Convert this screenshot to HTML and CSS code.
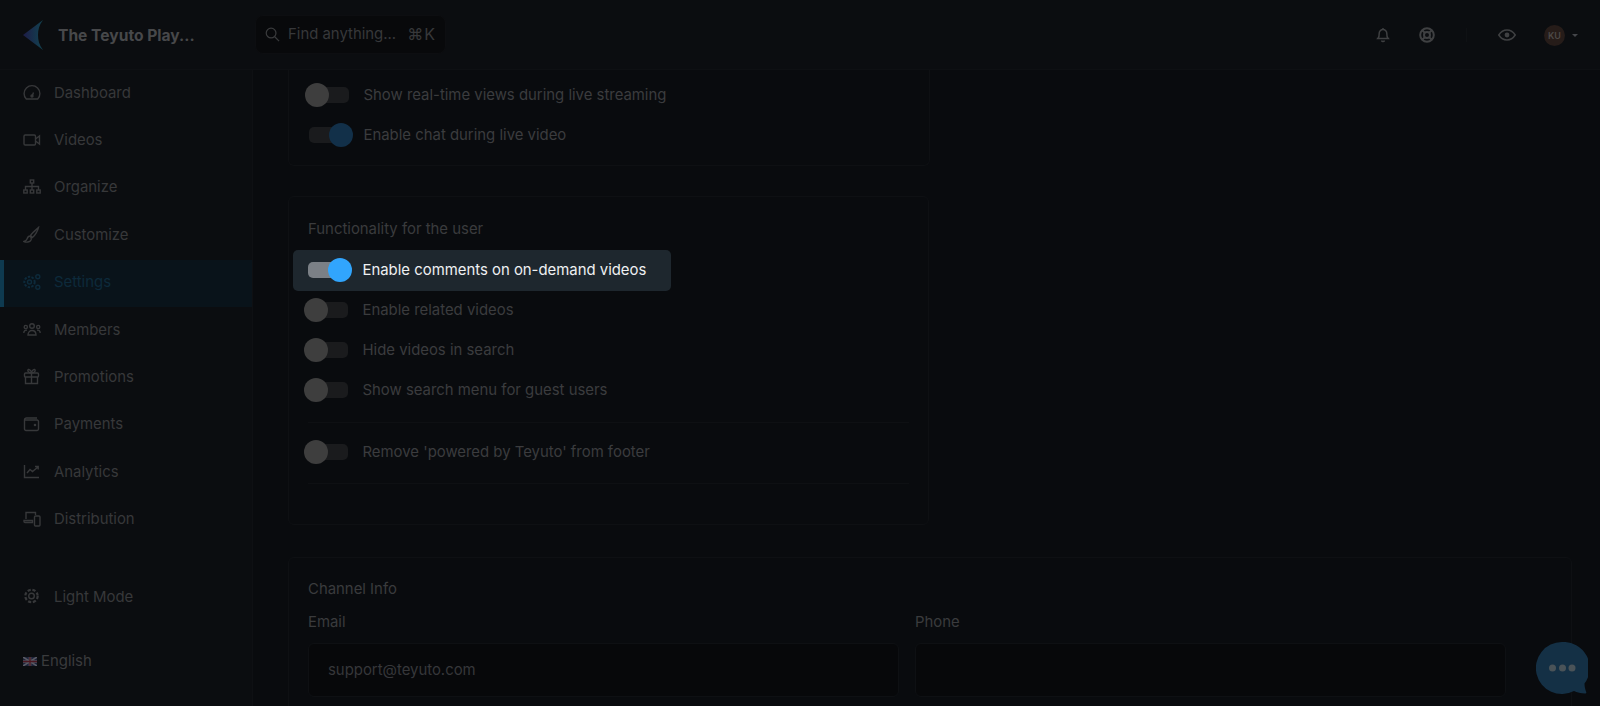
FILE: index.html
```html
<!DOCTYPE html>
<html lang="en">
<head>
<meta charset="utf-8">
<title>Teyuto Settings</title>
<link rel="stylesheet" href="styles.css">
</head>
<body>
<div class="app">
  <header class="topbar">
    <div class="brand">
      <svg class="logo" viewBox="0 0 20 30" width="20" height="30">
        <defs><linearGradient id="lg" x1="0" y1="0.5" x2="1" y2="0.5"><stop offset="0" stop-color="#1d1c47"/><stop offset="1" stop-color="#124350"/></linearGradient></defs>
        <path d="M0 15 20 0C16 5 15 10 15 15s1 10 5 15z" fill="url(#lg)"/>
      </svg>
      <span class="brand-name">The Teyuto Play...</span>
    </div>
    <div class="search">
      <svg class="ic-search" viewBox="0 0 16 16" width="15" height="15"><circle cx="6.5" cy="6.5" r="5.2"/><path d="M10.4 10.4 15 15"/></svg>
      <span class="search-text">Find anything...</span>
      <span class="search-key">⌘K</span>
    </div>
    <div class="top-actions">
      <svg class="top-ic bell" viewBox="0 0 16 16" width="16" height="16"><path d="M3 11.5c1-1 1.2-2.5 1.2-5A3.8 3.8 0 0 1 8 2.5a3.8 3.8 0 0 1 3.8 4c0 2.500.2 4 1.200 5zM1.800 11.500h12.400M8 1v1.500M6.500 13.500a1.600 1.600 0 0 0 3 0"/></svg>
      <svg class="top-ic ring" viewBox="0 0 16 16" width="16" height="16"><circle cx="8" cy="8" r="6.800"/><circle cx="8" cy="8" r="3"/><path d="M3.200 3.200l2.700 2.700M12.800 3.200l-2.700 2.700M3.200 12.800l2.700-2.700M12.800 12.800l-2.700-2.700"/></svg>
      <span class="top-sep"></span>
      <svg class="top-ic eye" viewBox="0 0 18 12" width="18" height="12"><path d="M.8 6C3 2.500 5.800 1 9 1s6 1.500 8.200 5C15 9.500 12.200 11 9 11S3 9.500.8 6z"/><circle class="eye-pupil" cx="9" cy="6" r="2.400"/></svg>
      <span class="avatar">KU</span>
      <span class="caret"></span>
    </div>
  </header>

  <div class="body">
    <aside class="sidebar">
      <nav class="nav">
        <a class="nav-item"><svg class="nav-ic" viewBox="0 0 18 18"><path d="M3.300 15A7.900 7.900 0 1 1 14.700 15zM9 12.500l1.500-4"/><circle cx="9" cy="12" r="1"/></svg>Dashboard</a>
        <a class="nav-item"><svg class="nav-ic" viewBox="0 0 18 18"><rect x="1" y="4" width="11.500" height="10" rx="1.200"/><path d="M12.500 8 16.500 5v8l-4-3"/></svg>Videos</a>
        <a class="nav-item"><svg class="nav-ic" viewBox="0 0 18 18"><rect x="7.300" y="2" width="3.400" height="3"/><rect x=".8" y="12" width="3.400" height="3"/><rect x="7.300" y="12" width="3.400" height="3"/><rect x="13.800" y="12" width="3.400" height="3"/><path d="M9 5v7M2.500 12V8.500h13V12"/></svg>Organize</a>
        <a class="nav-item"><svg class="nav-ic" viewBox="0 0 18 18"><path d="M15.500 1.500C14 3 9.500 6.500 7.500 9.500l2 2c2.500-2 5.500-7 6-10zM7 10c-2 0-2.500 1.500-3 3s-1.500 2-3 2.500c2 1 6 1 7-1.500.5-1.500 0-3-1-4z"/></svg>Customize</a>
        <a class="nav-item active"><svg class="nav-ic" viewBox="0 0 18 18"><circle cx="6.500" cy="9" r="5.200" stroke-width="2" stroke-dasharray="2.400 1.300"/><circle cx="6.500" cy="9" r="2"/><circle cx="14.800" cy="3.800" r="2"/><circle cx="14.800" cy="14.200" r="2"/></svg>Settings</a>
        <a class="nav-item"><svg class="nav-ic" viewBox="0 0 18 18"><circle cx="9" cy="5" r="2.300"/><circle cx="2.800" cy="6" r="1.600"/><circle cx="15.200" cy="6" r="1.600"/><path d="M5 14c0-6 8-6 8 0zM.8 12c0-2.500 1.500-3 3.200-2.800M17.200 12c0-2.500-1.500-3-3.200-2.800"/></svg>Members</a>
        <a class="nav-item"><svg class="nav-ic" viewBox="0 0 18 18"><rect x="1.500" y="5" width="14" height="4" rx="1"/><path d="M2.500 9v6.500h12V9M8.500 5v10.500M8.500 5C5 5 4 2 5.500 1.500S8.500 4 8.500 5zM8.500 5c3.500 0 4.500-3 3-3.500S8.500 4 8.500 5z"/></svg>Promotions</a>
        <a class="nav-item"><svg class="nav-ic" viewBox="0 0 18 18"><path d="M14 3H3.500A2 2 0 0 0 1.500 5v9a1.500 1.500 0 0 0 1.500 1.500h11a1.500 1.500 0 0 0 1.500-1.500V6.500A1.500 1.500 0 0 0 14 5H1.800"/><circle cx="12" cy="10" r=".6"/></svg>Payments</a>
        <a class="nav-item"><svg class="nav-ic" viewBox="0 0 18 18"><path d="M1.500 2v12.500h14.500M4 10l3-3.500 2.500 2L15 4M12 3.500h3.200v3"/></svg>Analytics</a>
        <a class="nav-item"><svg class="nav-ic" viewBox="0 0 18 18"><path d="M3 9V2.500h9.500V5M1 10.500h8.500v2H2a1 1 0 0 1-1-1z"/><rect x="11.500" y="6" width="5.500" height="10" rx="1"/></svg>Distribution</a>
        <a class="nav-item nav-mode"><svg class="nav-ic" viewBox="0 0 18 18"><circle cx="8.500" cy="8" r="2.800"/><circle cx="8.500" cy="8" r="6.200" stroke-dasharray="3.200 1.700" stroke-width="2.200"/></svg>Light Mode</a>
      </nav>
      <div class="lang">
        <svg class="flag" viewBox="0 0 14 9" width="14" height="9"><rect width="14" height="9" fill="#1b2238"/><path d="M0 0 14 9M14 0 0 9" stroke="#5a5a64" stroke-width="1.600"/><path d="M7 0v9M0 4.500h14" stroke="#5a5a64" stroke-width="2.600"/><path d="M7 0v9M0 4.500h14" stroke="#4a1620" stroke-width="1.300"/></svg>
        <span>English</span>
      </div>
    </aside>

    <main class="main">
      <section class="card card-short">
        <div class="row"><span class="toggle"><span class="knob"></span></span><span>Show real-time views during live streaming</span></div>
        <div class="row"><span class="toggle on"><span class="knob"></span></span><span>Enable chat during live video</span></div>
      </section>

      <section class="card card-user">
        <h2 class="card-title">Functionality for the user</h2>
        <div class="row row-hl"><span class="toggle on lit"><span class="knob"></span></span><span>Enable comments on on-demand videos</span></div>
        <div class="row"><span class="toggle"><span class="knob"></span></span><span>Enable related videos</span></div>
        <div class="row"><span class="toggle"><span class="knob"></span></span><span>Hide videos in search</span></div>
        <div class="row"><span class="toggle"><span class="knob"></span></span><span>Show search menu for guest users</span></div>
        <hr class="rule">
        <div class="row"><span class="toggle"><span class="knob"></span></span><span>Remove 'powered by Teyuto' from footer</span></div>
        <hr class="rule">
      </section>

      <section class="card card-info">
        <h2 class="card-title">Channel Info</h2>
        <div class="fields">
          <div class="field"><label class="field-label">Email</label><div class="input">support@teyuto.com</div></div>
          <div class="field"><label class="field-label">Phone</label><div class="input"></div></div>
        </div>
      </section>
    </main>
  </div>

  <button class="chat" aria-label="Chat">
    <svg viewBox="0 0 52 52" width="52" height="52"><path class="chat-bg" d="M26 0a26 26 0 1 0 12 49c3 1.500 7 2.500 11 2.500 1.500 0 1.500-1 1-2-1-3-1.500-5-1.500-8A26 26 0 0 0 26 0z"/><circle class="chat-dot" cx="16.500" cy="26" r="3.500"/><circle class="chat-dot" cx="26.500" cy="26" r="3.500"/><circle class="chat-dot" cx="36" cy="26" r="3.500"/></svg>
  </button>
</div>
</body>
</html>
```

FILE: styles.css
```css
* { box-sizing: border-box; }
html, body { margin: 0; height: 100%; overflow: hidden; }
body {
  background: #090b0e;
  color: #3b3c3e;
  font-family: Inter, "Liberation Sans", sans-serif;
  font-size: 14.9px;
}
.app { position: relative; height: 706px; display: flex; flex-direction: column; overflow: hidden; }

.topbar {
  flex: 0 0 70px;
  display: flex;
  align-items: center;
  background: #0b0d10;
  border-bottom: 1px solid #0e1013;
  padding: 0 22px 0 23px;
}
.brand { width: 232px; display: flex; align-items: center; gap: 15px; }
.logo { flex: none; }
.brand-name { padding-top: 2px; font-size: 15.6px; font-weight: 700; color: #47484a; white-space: nowrap; }
.search {
  width: 191px;
  height: 39px;
  margin-top: -1px;
  display: flex;
  align-items: center;
  padding: 0 9px;
  background: #08090b;
  border: 1px solid #0d0e11;
  border-radius: 8px;
  color: #37383a;
}
.ic-search { flex: none; fill: none; stroke: #3a3b3d; stroke-width: 1.300; margin-right: 8px; }
.search-text { flex: 1; white-space: nowrap; }
.search-key { font-size: 16px; letter-spacing: 1px; }
.top-actions { margin-left: auto; display: flex; align-items: center; }
.top-ic { fill: none; stroke: #3f4042; stroke-width: 1.500; flex: none; }
.bell { margin-right: 28px; }
.ring { margin-right: 31px; stroke-width: 2; }
.top-sep { width: 1px; height: 14px; background: #0f1114; margin-right: 31px; }
.eye { width: 18px; margin-right: 28px; }
.eye-pupil { fill: #3f4042; stroke: none; }
.avatar {
  width: 21px;
  height: 21px;
  margin-top: 2px;
  border-radius: 50%;
  background: #261c19;
  color: #4c4947;
  font-size: 9px;
  font-weight: 600;
  display: flex;
  align-items: center;
  justify-content: center;
}
.caret {
  margin: 2px 0 0 7px;
  border-left: 3.500px solid transparent;
  border-right: 3.500px solid transparent;
  border-top: 3.500px solid #45464a;
}

.body { flex: 1; display: flex; min-height: 0; }
.sidebar {
  flex: 0 0 253px;
  background: #0b0d10;
  border-right: 1px solid #0e1013;
}
.nav { display: flex; flex-direction: column; }
.nav-item {
  height: 47.400px;
  padding: 0 0 2px 23px;
  display: flex;
  align-items: center;
  gap: 13px;
  color: #37383a;
}
.nav-ic { width: 18px; height: 18px; flex: none; fill: none; stroke: #37383a; stroke-width: 1.400; }
.active { background: #09131a; color: #0d2a3b; box-shadow: inset 4px 0 0 #0e3a50; }
.active .nav-ic { stroke: #0d2a3b; }
.nav-mode { margin-top: 30px; }
.lang {
  margin-top: 31px;
  padding-left: 23px;
  display: flex;
  align-items: center;
  gap: 4px;
  color: #3a3b3d;
}
.flag { flex: none; }

.main { flex: 1; min-width: 0; padding: 0 28px 0 35px; background: #090b0e; }
.card {
  background: #090b0e;
  border: 1px solid #0e1013;
  border-radius: 6px;
  padding: 0 19px;
}
.card-short { width: 642px; height: 96px; padding: 4.500px 0 0 20px; border-top: 0; border-radius: 0 0 6px 6px; }
.card-user { width: 641px; height: 329px; margin-top: 30px; padding-top: 22px; }
.card-info { margin-top: 32px; padding-top: 21px; height: 200px; }
.card-title {
  margin: 0;
  font-size: 14.900px;
  font-weight: 400;
  line-height: 20px;
  color: #3a3b3d;
}
.row { height: 40.300px; display: flex; align-items: center; gap: 14.500px; white-space: nowrap; }
.row-hl {
  width: 378px;
  height: 41px;
  margin: 10.500px 0 -0.800px -15px;
  padding-left: 15px;
  background: #1e272e;
  border-radius: 5px;
  color: #eef0f2;
}
.toggle { position: relative; flex: none; width: 40px; height: 16px; border-radius: 5px; background: #1a1b1d; }
.knob { position: absolute; top: -4px; left: -4px; width: 24px; height: 24px; border-radius: 50%; background: #3e3e3e; }
.on .knob { left: auto; right: -4px; background: #123049; }
.lit { background: #7b8086; }
.lit .knob { background: #31a5fd; }
.rule { margin: 11px 0 9.500px; border: 0; border-top: 1px solid #0e1013; }
.fields { display: grid; grid-template-columns: 591px 591px; gap: 16px; margin-top: 13px; }
.field-label { display: block; line-height: 20px; color: #3a3b3d; margin-bottom: 11px; }
.input {
  height: 54px;
  padding: 0 19px 1px;
  display: flex;
  align-items: center;
  background: #07080a;
  border: 1px solid #0e1013;
  border-radius: 6px;
  color: #36373a;
}

.chat {
  position: absolute;
  left: 1536px;
  top: 642px;
  width: 52px;
  height: 52px;
  padding: 0;
  border: 0;
  background: none;
}
.chat-bg { fill: #143045; }
.chat-dot { fill: #4a5358; }
```
